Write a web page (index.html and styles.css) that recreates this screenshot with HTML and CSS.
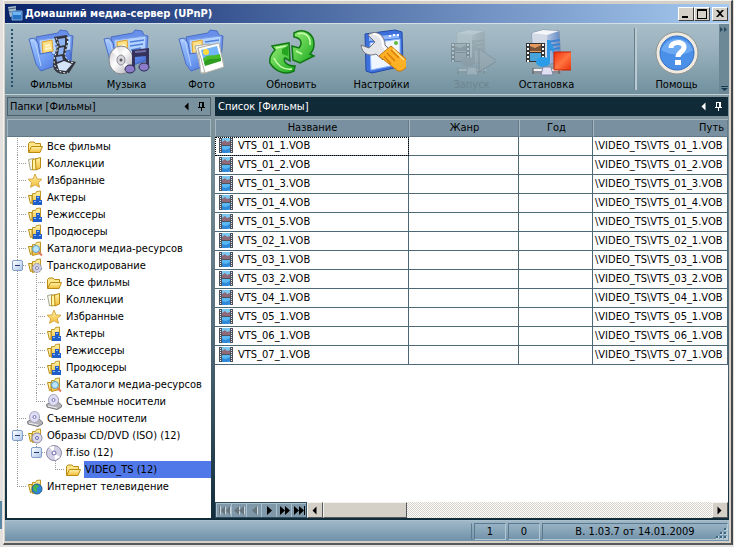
FILE: index.html
```
<!DOCTYPE html>
<html lang="ru">
<head>
  <meta charset="UTF-8">
  <title>Домашний медиа-сервер (UPnP)</title>
  <meta name="viewport" content="width=device-width, initial-scale=1.0">
  <link rel="stylesheet" href="styles.css">
</head>
<body>

<!-- shared icons -->
<svg class="sprite" aria-hidden="true">
  <defs>
    <linearGradient id="gBlue" x1="0" y1="0" x2="1" y2="1">
      <stop offset="0" stop-color="#a9ccff"/><stop offset=".5" stop-color="#6f9df2"/><stop offset="1" stop-color="#3c5fd0"/>
    </linearGradient>
    <linearGradient id="gGreen" x1="0" y1="0" x2="1" y2="1">
      <stop offset="0" stop-color="#9df07a"/><stop offset="1" stop-color="#17a81c"/>
    </linearGradient>
    <linearGradient id="gRed" x1="0" y1="0" x2="1" y2="1">
      <stop offset="0" stop-color="#f0300c"/><stop offset=".5" stop-color="#ff7440"/><stop offset="1" stop-color="#e83008"/>
    </linearGradient>
    <linearGradient id="gDisc" x1="0" y1="0" x2="1" y2="1">
      <stop offset="0" stop-color="#c4c4c8"/><stop offset=".45" stop-color="#fff"/><stop offset="1" stop-color="#a0a0aa"/>
    </linearGradient>
    <linearGradient id="gYellow" x1="0" y1="0" x2="0" y2="1">
      <stop offset="0" stop-color="#fff3a8"/><stop offset="1" stop-color="#f2bc38"/>
    </linearGradient>
    <linearGradient id="gServer" x1="0" y1="0" x2="1" y2="0">
      <stop offset="0" stop-color="#eef2f8"/><stop offset=".5" stop-color="#b8c6de"/><stop offset="1" stop-color="#5f87c4"/>
    </linearGradient>
    <symbol id="big-folder" viewBox="0 0 48 48">
      <path d="M8 9 30 5 32 2 39 3 41 7 45 8 43 33 13 42Z" fill="#6890ea" stroke="#4a6cc4"/>
      <path d="M11 12 43 8 42 31 14 39Z" fill="#b5d3ff" stroke="#7ba0ea"/>
      <path d="M14 14 24 12 25 23 15 26Z" fill="#ffe083" stroke="#e0a02a"/>
      <path d="M17 18 22 17M17 21 23 20" stroke="#fff6d0" stroke-width="2"/>
      <path d="M27 14 41 12M27 18 40 16M28 22 38 20" stroke="#4f80db" stroke-width="1.5"/>
      <path d="M1 11 6 10 10 15 12 26 23 24 25 27 42 22 43 32 13 43 8 36Z" fill="url(#gBlue)" stroke="#4a6cc4"/>
      <path d="M3 13 7 13 13 38" fill="none" stroke="#bbd3ff"/>
    </symbol>
    <symbol id="big-film" viewBox="0 0 48 48">
      <use href="#big-folder"/>
      <path d="M26 9 39 7C42 14 38 22 37 28 38 32 42 33 48 34L41 45C32 48 25 44 25 36 25 28 29 22 29 17Z" fill="#33353f"/>
      <path d="M30 11 37 10 37 17 32 18ZM31 20 36 19 35 26 30 27ZM28 29 34 28 35 32 29 34Z" fill="#8fb2f0"/>
      <path d="M29 36 36 33 44 36 38 43 31 42Z" fill="#d5e6fb"/>
      <path d="M28 10C33 18 27 25 26 32 26 41 31 45 40 45M39 9C41 15 37 22 37 27 38 31 41 34 46 35" fill="none" stroke="#eef0f4" stroke-dasharray="2 2"/>
    </symbol>
    <symbol id="big-music" viewBox="0 0 48 48">
      <use href="#big-folder"/>
      <ellipse cx="18" cy="32" rx="12" ry="14" fill="url(#gDisc)" stroke="#85858c"/>
      <path d="M18 32 9 24 14 19ZM18 32 28 39 23 44Z" fill="#fff" opacity=".8"/>
      <ellipse cx="18" cy="32" rx="4" ry="5" fill="#d6d6dc" stroke="#8c8c96"/>
      <circle cx="18" cy="32" r="1.5" fill="#555"/>
      <path d="M29 22 46 20V39H43V28L32 29V41H29Z" fill="#35335e"/>
      <path d="M32 24 43 23" stroke="#7471a8" stroke-width="2"/>
      <ellipse cx="27" cy="41" rx="5" ry="4" fill="#8a7cc8" stroke="#2b2850"/>
      <ellipse cx="41" cy="39" rx="5" ry="4" fill="#8a7cc8" stroke="#2b2850"/>
    </symbol>
    <symbol id="big-photo" viewBox="0 0 48 48">
      <use href="#big-folder"/>
      <path d="M17 18 31 16 38 40 24 46Z" fill="#f6f6f2" stroke="#a8a8a0"/>
      <path d="M20 20 36 17 44 39 23 45Z" fill="#fff" stroke="#bbb"/>
      <path d="M20 20 41 15 46 39 27 45Z" fill="#fff" stroke="#b0b0a8"/>
      <path d="M23 22 39 18 42 29 26 34Z" fill="#72b5fb"/>
      <path d="M25 31C30 25 33 29 42 26L43 32 27 37Z" fill="#49bd2b"/>
      <path d="M26 34C31 29 36 32 43 30L43 33 27 38Z" fill="#2c9b1f"/>
      <circle cx="28" cy="24" r="3" fill="#ffdc3c"/>
    </symbol>
    <symbol id="big-refresh" viewBox="0 0 48 48">
      <path d="M4 18 21 15 22 33 17 30C15 33 18 38 27 38L26 43C17 48 7 43 2 35 1 30 4 25 7 22Z" fill="url(#gGreen)" stroke="#117714" stroke-width="1.5"/>
      <path d="M26 5C36-1 46 6 46 16 46 21 44 24 42 26L46 28 32 35 25 32 24 18 31 20C35 15 33 10 26 9Z" fill="url(#gGreen)" stroke="#117714" stroke-width="1.5"/>
      <path d="M8 20 18 18M6 30C10 39 16 42 24 41M30 6C37 3 43 9 42 17M28 23 34 26" fill="none" stroke="#c6ffad" stroke-width="1.5"/>
      <path d="M14 21 20 18 20 28 14 26Z" fill="#26a61f"/>
    </symbol>
    <symbol id="big-settings" viewBox="0 0 48 48">
      <path d="M7 6 37 2 44 4 45 38 14 45 8 43Z" fill="#3d70db" stroke="#244ca8"/>
      <path d="M12 15 42 11 42 36 13 42Z" fill="#eff6ff" stroke="#8eb7ff"/>
      <path d="M11 9 41 6 41 10 11 13Z" fill="#8eb7ff"/>
      <path d="M31 8h2M35 7h2M39 7h2" stroke="#fff" stroke-width="2"/>
      <circle cx="38" cy="15" r="2" fill="#65b83f"/>
      <path d="M10 7C18 1 27 7 27 17L33 23 25 32 18 26C10 29 4 25 3 17L11 20 17 14Z" fill="#e4e5e8" stroke="#74767d"/>
      <path d="M15 6C22 6 25 12 25 18L29 23" fill="none" stroke="#fff" stroke-width="2"/>
      <path d="M21 28 33 18 48 31C52 37 46 44 40 43Z" fill="#ffb126" stroke="#c97606"/>
      <path d="M29 25 37 33M33 22 41 30M26 28 33 36" stroke="#dc7e08" stroke-width="1.5"/>
      <path d="M35 21 46 32" stroke="#ffe08a" stroke-width="1.5"/>
    </symbol>
    <symbol id="big-server" viewBox="0 0 48 48">
      <path d="M9 5 20 2 36 3 38 34 22 37 10 33Z" fill="url(#gServer)" stroke="#8290ac"/>
      <path d="M9 5 24 7 24 36 10 33Z" fill="#d3dae6"/>
      <path d="M9 5 20 2 36 3 24 7Z" fill="#f4f6fa"/>
      <path d="M25 14 37 12M25 18 37 16M25 22 37 20" stroke="#3d82cf" stroke-width="2"/>
      <path d="M3 15H22V34H3Z" fill="#333"/>
      <path d="M7 16H18V24H7Z" fill="#e59b60"/><path d="M7 25H18V33H7Z" fill="#4aa4dc"/>
      <path d="M7 18 12 20 18 17V23H7Z" fill="#7b5438"/>
      <path d="M5 16V34M20 16V34" stroke="#fff" stroke-width="2" stroke-dasharray="2 2"/>
      <path d="M24 12H27C28 18 34 20 30 27 30 22 27 21 27 20V34H24Z" fill="#2f96e4"/>
      <ellipse cx="20" cy="34" rx="7" ry="5" fill="#2b9ce8"/>
      <path d="M10 43H38" stroke="#8b8e96" stroke-width="5"/>
      <path d="M10 42H38" stroke="#f4f4f6" stroke-width="2"/>
      <path d="M20 39H28L30 47H18Z" fill="#dfe0f1" stroke="#8084a4"/>
      <path d="M10 40v6M36 40v6" stroke="#555" stroke-width="1"/>
    </symbol>
    <symbol id="big-start" viewBox="0 0 48 48">
      <use href="#big-server"/>
      <path d="M31 21 49 33 31 44Z" fill="#aaa" stroke="#555"/>
    </symbol>
    <symbol id="big-stop" viewBox="0 0 48 48">
      <use href="#big-server"/>
      <path d="M31 24H49V42H31Z" fill="url(#gRed)" stroke="#c02404"/>
    </symbol>
    <symbol id="big-help" viewBox="0 0 48 48">
      <circle cx="24" cy="25" r="21" fill="#eeeae0" stroke="#8f928f"/>
      <circle cx="24" cy="25" r="17" fill="#4a8fe8" stroke="#356cc0"/>
      <path d="M8 22A17 17 0 0 1 40 22C32 28 18 28 8 22Z" fill="#79b4f8" opacity=".7"/>
      <path d="M18 20C18 13 31 13 31 19 31 24 25 24 25 29" fill="none" stroke="#fff" stroke-width="5"/>
      <path d="M22 32H28V37H22Z" fill="#fff"/>
    </symbol>

    <symbol id="folder" viewBox="0 0 16 16">
      <path d="M1.500 13V4.500L3 3H7L8.500 4.500H13.500V7" fill="#ffe58a" stroke="#b98a10"/>
      <path d="M1.500 13.500 4.500 7.500H15.500L13 13.500Z" fill="url(#gYellow)" stroke="#b98a10"/>
    </symbol>
    <symbol id="stack" viewBox="0 0 16 16">
      <path d="M1.500 3.500 6.500 2.500V13L3.500 14Z" fill="#f5f5ea" stroke="#a8a890"/>
      <path d="M5.500 3.500 9.500 2.500V13.500L5.500 14Z" fill="#fff2a0" stroke="#bb9422"/>
      <path d="M8.500 3 13.500 1.500V12L9 14Z" fill="url(#gYellow)" stroke="#b98a10"/>
    </symbol>
    <symbol id="star" viewBox="0 0 16 16">
      <path d="M8 1 10 6 15 6.200 11.300 9.600 12.500 14.300 8 11.800 3.500 14.300 4.700 9.600 1 6.200 6 6Z" fill="url(#gYellow)" stroke="#d8a840"/>
    </symbol>
    <symbol id="sheets" viewBox="0 0 16 16">
      <path d="M1.500 5.500H5V13L3.500 13.500Z" fill="#fff2a8" stroke="#b98a10"/>
      <path d="M5.500 3.500 8.500 3.500 9.500 1.500 13.500 1V12.500L5.500 14.500Z" fill="url(#gYellow)" stroke="#c0962a"/>
    </symbol>
    <symbol id="people" viewBox="0 0 16 16">
      <use href="#sheets"/>
      <path d="M9 6h4v4h2v5H6v-5h3Z" fill="#205dc8"/>
      <path d="M10 7h2v1h-2zM7 11h2v1H7zM12 11h2v1h-2z" fill="#8fc0ff"/>
    </symbol>
    <symbol id="search" viewBox="0 0 16 16">
      <use href="#sheets"/>
      <circle cx="9" cy="8" r="3.500" fill="#b9e4fa" stroke="#5a9cc4"/>
      <path d="M11.500 11 15 14.500" stroke="#df7a5a" stroke-width="2"/>
    </symbol>
    <symbol id="gear" viewBox="0 0 16 16">
      <use href="#sheets"/>
      <circle cx="10" cy="10" r="4.500" fill="#cfcfe4" stroke="#8484a8" stroke-dasharray="2 1"/>
      <circle cx="10" cy="10" r="1.500" fill="#fff" stroke="#8484a8"/>
    </symbol>
    <symbol id="drive" viewBox="0 0 16 16">
      <path d="M.5 10.500 5 8H12L15.500 11V13L11 15.500 1 13Z" fill="#b4b4b8" stroke="#77777c"/>
      <ellipse cx="7.500" cy="6" rx="5" ry="5.500" fill="#e0def2" stroke="#a4a2bc"/>
      <circle cx="7.500" cy="6" r="1.500" fill="#fff" stroke="#7470c0"/>
      <path d="M2 12 11 14" stroke="#f2f2f2"/>
    </symbol>
    <symbol id="disc" viewBox="0 0 16 16">
      <circle cx="8" cy="8" r="7.500" fill="#d2d0e4" stroke="#8b89a4"/>
      <path d="M8 8 3 2 8 1ZM8 8 14 12 9 15Z" fill="#fff"/>
      <circle cx="8" cy="8" r="2" fill="#fff" stroke="#6864b0"/>
    </symbol>
    <symbol id="isodisc" viewBox="0 0 16 16">
      <use href="#sheets"/>
      <circle cx="10" cy="10" r="5" fill="#dcdaea" stroke="#8b89a4"/>
      <circle cx="10" cy="10" r="1.500" fill="#fff" stroke="#6864b0"/>
    </symbol>
    <symbol id="globe" viewBox="0 0 16 16">
      <use href="#sheets"/>
      <circle cx="10" cy="10" r="5" fill="#2f86d8" stroke="#1f5c8e"/>
      <path d="M6 8 9 5.500 12 7 9.500 9.500 10 13 7 12Z" fill="#46b846"/>
    </symbol>
    <symbol id="clip" viewBox="0 0 14 15">
      <path d="M0 0H14V15H0Z" fill="#4c525c"/>
      <path d="M3 0H11V7H3Z" fill="#7cc8f0"/><path d="M3 4 6 2 8 4 11 3V7H3Z" fill="#8e6a78"/>
      <path d="M3 8H11V15H3Z" fill="#58b8f4"/><path d="M3 11 7 12 11 10V14L8 15H3Z" fill="#2f88d8"/>
      <path d="M1.500 1V15M12.500 1V15" stroke="#e8ecf0" stroke-dasharray="1 1"/>
    </symbol>
    <symbol id="pin" viewBox="0 0 8 9">
      <path d="M2 0H6V1H2ZM2 1H3V5H2ZM5 1H7V5H5ZM6 0H7V1H6ZM1 5H8V6H1ZM4 6H5V9H4Z" fill="currentColor"/>
    </symbol>
    <symbol id="left" viewBox="0 0 5 9">
      <path d="M4.500.5V8.500L.5 4.500Z" fill="currentColor"/>
    </symbol>
    <symbol id="right" viewBox="0 0 5 9">
      <path d="M.5.5V8.500L4.500 4.500Z" fill="currentColor"/>
    </symbol>
  </defs>
</svg>

<div class="window">
  <header class="titlebar">
    <svg class="app-icon" viewBox="0 0 16 16">
      <path d="M1 1 9 0V9L3 11Z" fill="#a9bccb"/><path d="M1 3 9 2M2 6 9 5" stroke="#43627d"/>
      <path d="M5 5H15V14H5Z" fill="#2674c8" stroke="#7fa9d4"/><path d="M6 6H14V9H6Z" fill="#70b3ef"/>
    </svg>
    <h1>Домашний медиа-сервер (UPnP)</h1>
    <div class="win-buttons">
      <button type="button" aria-label="Свернуть"><svg viewBox="0 0 12 10"><path d="M2 7H8V9H2Z"/></svg></button>
      <button type="button" aria-label="Развернуть"><svg viewBox="0 0 12 10"><path d="M1 0H11V10H1ZM2 2V9H10V2Z" fill-rule="evenodd"/></svg></button>
      <button type="button" class="close" aria-label="Закрыть"><svg viewBox="0 0 12 10"><path d="M2 1H4L6 3 8 1H10L7 4.500 10 8H8L6 6 4 8H2L5 4.500Z"/></svg></button>
    </div>
  </header>

  <nav class="toolbar">
    <span class="grip"></span>
    <div class="group">
      <button type="button" class="tool"><svg><use href="#big-film"/></svg>Фильмы</button>
      <button type="button" class="tool"><svg><use href="#big-music"/></svg>Музыка</button>
      <button type="button" class="tool"><svg><use href="#big-photo"/></svg>Фото</button>
    </div>
    <div class="group">
      <button type="button" class="tool"><svg><use href="#big-refresh"/></svg>Обновить</button>
    </div>
    <div class="group">
      <button type="button" class="tool"><svg><use href="#big-settings"/></svg>Настройки</button>
    </div>
    <div class="group">
      <button type="button" class="tool" disabled><svg><use href="#big-start"/></svg>Запуск</button>
      <button type="button" class="tool"><svg><use href="#big-stop"/></svg>Остановка</button>
    </div>
    <div class="group help">
      <button type="button" class="tool"><svg><use href="#big-help"/></svg>Помощь</button>
    </div>
    <button type="button" class="overflow" aria-label="Ещё">
      <svg viewBox="0 0 8 5"><path d="M0 0 3 2.500 0 5ZM4 0 7 2.500 4 5Z" fill="#24485e"/></svg>
      <svg viewBox="0 0 8 5"><path d="M1 0H8V1H1ZM1 2H8L4.500 5Z" fill="#173a50"/></svg>
    </button>
  </nav>

  <main class="panes">
    <section class="pane folders">
      <div class="pane-title">
        <h2>Папки [Фильмы]</h2>
        <button type="button" aria-label="Скрыть"><svg class="arrow"><use href="#left"/></svg></button>
        <button type="button" aria-label="Закрепить"><svg class="pin"><use href="#pin"/></svg></button>
      </div>
      <div class="blank-head"></div>
      <div class="tree-box">
        <ul class="tree">
          <li><div class="node"><svg><use href="#folder"/></svg><a href="#">Все фильмы</a></div></li>
          <li><div class="node"><svg><use href="#stack"/></svg><a href="#">Коллекции</a></div></li>
          <li><div class="node"><svg><use href="#star"/></svg><a href="#">Избранные</a></div></li>
          <li><div class="node"><svg><use href="#people"/></svg><a href="#">Актеры</a></div></li>
          <li><div class="node"><svg><use href="#people"/></svg><a href="#">Режиссеры</a></div></li>
          <li><div class="node"><svg><use href="#people"/></svg><a href="#">Продюсеры</a></div></li>
          <li><div class="node"><svg><use href="#search"/></svg><a href="#">Каталоги медиа-ресурсов</a></div></li>
          <li>
            <div class="node"><button type="button" class="toggle" aria-label="Свернуть ветку"></button><svg><use href="#gear"/></svg><a href="#">Транскодирование</a></div>
            <ul>
              <li><div class="node"><svg><use href="#folder"/></svg><a href="#">Все фильмы</a></div></li>
              <li><div class="node"><svg><use href="#stack"/></svg><a href="#">Коллекции</a></div></li>
              <li><div class="node"><svg><use href="#star"/></svg><a href="#">Избранные</a></div></li>
              <li><div class="node"><svg><use href="#people"/></svg><a href="#">Актеры</a></div></li>
              <li><div class="node"><svg><use href="#people"/></svg><a href="#">Режиссеры</a></div></li>
              <li><div class="node"><svg><use href="#people"/></svg><a href="#">Продюсеры</a></div></li>
              <li><div class="node"><svg><use href="#search"/></svg><a href="#">Каталоги медиа-ресурсов</a></div></li>
              <li><div class="node"><svg><use href="#drive"/></svg><a href="#">Съемные носители</a></div></li>
            </ul>
          </li>
          <li><div class="node"><svg><use href="#drive"/></svg><a href="#">Съемные носители</a></div></li>
          <li>
            <div class="node"><button type="button" class="toggle" aria-label="Свернуть ветку"></button><svg><use href="#isodisc"/></svg><a href="#">Образы CD/DVD (ISO) (12)</a></div>
            <ul>
              <li>
                <div class="node"><button type="button" class="toggle" aria-label="Свернуть ветку"></button><svg><use href="#disc"/></svg><a href="#">ff.iso (12)</a></div>
                <ul>
                  <li><div class="node"><svg><use href="#folder"/></svg><a href="#" class="selected">VIDEO_TS (12)</a></div></li>
                </ul>
              </li>
            </ul>
          </li>
          <li><div class="node"><svg><use href="#globe"/></svg><a href="#">Интернет телевидение</a></div></li>
        </ul>
      </div>
    </section>

    <section class="pane list">
      <div class="pane-title active">
        <h2>Список [Фильмы]</h2>
        <button type="button" aria-label="Скрыть"><svg class="arrow"><use href="#left"/></svg></button>
        <button type="button" aria-label="Закрепить"><svg class="pin"><use href="#pin"/></svg></button>
      </div>
      <div class="grid-box">
        <table>
          <colgroup><col class="c-name"><col class="c-genre"><col class="c-year"><col></colgroup>
          <thead>
            <tr><th>Название</th><th>Жанр</th><th>Год</th><th class="path">Путь</th></tr>
          </thead>
          <tbody>
            <tr class="focused"><td><svg><use href="#clip"/></svg>VTS_01_1.VOB</td><td></td><td></td><td>\VIDEO_TS\VTS_01_1.VOB</td></tr>
            <tr><td><svg><use href="#clip"/></svg>VTS_01_2.VOB</td><td></td><td></td><td>\VIDEO_TS\VTS_01_2.VOB</td></tr>
            <tr><td><svg><use href="#clip"/></svg>VTS_01_3.VOB</td><td></td><td></td><td>\VIDEO_TS\VTS_01_3.VOB</td></tr>
            <tr><td><svg><use href="#clip"/></svg>VTS_01_4.VOB</td><td></td><td></td><td>\VIDEO_TS\VTS_01_4.VOB</td></tr>
            <tr><td><svg><use href="#clip"/></svg>VTS_01_5.VOB</td><td></td><td></td><td>\VIDEO_TS\VTS_01_5.VOB</td></tr>
            <tr><td><svg><use href="#clip"/></svg>VTS_02_1.VOB</td><td></td><td></td><td>\VIDEO_TS\VTS_02_1.VOB</td></tr>
            <tr><td><svg><use href="#clip"/></svg>VTS_03_1.VOB</td><td></td><td></td><td>\VIDEO_TS\VTS_03_1.VOB</td></tr>
            <tr><td><svg><use href="#clip"/></svg>VTS_03_2.VOB</td><td></td><td></td><td>\VIDEO_TS\VTS_03_2.VOB</td></tr>
            <tr><td><svg><use href="#clip"/></svg>VTS_04_1.VOB</td><td></td><td></td><td>\VIDEO_TS\VTS_04_1.VOB</td></tr>
            <tr><td><svg><use href="#clip"/></svg>VTS_05_1.VOB</td><td></td><td></td><td>\VIDEO_TS\VTS_05_1.VOB</td></tr>
            <tr><td><svg><use href="#clip"/></svg>VTS_06_1.VOB</td><td></td><td></td><td>\VIDEO_TS\VTS_06_1.VOB</td></tr>
            <tr><td><svg><use href="#clip"/></svg>VTS_07_1.VOB</td><td></td><td></td><td>\VIDEO_TS\VTS_07_1.VOB</td></tr>
          </tbody>
        </table>
      </div>
      <div class="bottom-bar">
        <div class="navigator">
          <button type="button" disabled aria-label="Первая"><svg viewBox="0 0 13 9"><path d="M1 0H2V9H1ZM7 0V9L3 4.500ZM12 0V9L8 4.500Z"/></svg></button>
          <button type="button" disabled aria-label="Страница назад"><svg viewBox="0 0 13 9"><path d="M6 0V9L1 4.500ZM11 0V9L6 4.500Z"/></svg></button>
          <button type="button" disabled aria-label="Назад"><svg viewBox="0 0 13 9"><path d="M9 0V9L4 4.500Z"/></svg></button>
          <button type="button" aria-label="Вперед"><svg viewBox="0 0 13 9"><path d="M4 0V9L9 4.500Z"/></svg></button>
          <button type="button" aria-label="Страница вперед"><svg viewBox="0 0 13 9"><path d="M2 0V9L7 4.500ZM7 0V9L12 4.500Z"/></svg></button>
          <button type="button" aria-label="Последняя"><svg viewBox="0 0 13 9"><path d="M1 0V9L6 4.500ZM6 0V9L11 4.500ZM11 0H12V9H11Z"/></svg></button>
        </div>
        <div class="scrollbar">
          <button type="button" class="scroll-arrow" aria-label="Влево"><svg class="arrow"><use href="#left"/></svg></button>
          <span class="thumb"></span>
          <button type="button" class="scroll-arrow end" aria-label="Вправо"><svg class="arrow"><use href="#right"/></svg></button>
        </div>
      </div>
    </section>
  </main>

  <footer class="statusbar">
    <span class="cell wide"></span>
    <span class="cell num">1</span>
    <span class="cell num">0</span>
    <span class="cell version">В. 1.03.7 от 14.01.2009</span>
    <svg class="resize" viewBox="0 0 12 12"><path d="M8 0h3v3H8zM4 4h3v3H4zM8 4h3v3H8zM0 8h3v3H0zM4 8h3v3H4zM8 8h3v3H8z" fill="#b5cbd8"/><path d="M8 0h2v2H8zM4 4h2v2H4zM8 4h2v2H8zM0 8h2v2H0zM4 8h2v2H4zM8 8h2v2H8z" fill="#3b6480"/></svg>
  </footer>
</div>

</body>
</html>
```
FILE: styles.css
```
* {
  box-sizing: border-box;
}

body {
  margin: 0;
  height: 100vh;
  padding: 0 0 2px 3px;
  background: linear-gradient(#5a88a4, #5a88a4) left 0 bottom 18px / 2px 28px no-repeat, #e4e0dd;
  font-family: "DejaVu Sans Condensed", Tahoma, sans-serif;
  font-size: 11px;
  line-height: 17px;
  color: #000;
}

button {
  margin: 0;
  padding: 0;
  border: 0;
  background: none;
  font: inherit;
  color: inherit;
}

h1, h2 {
  margin: 0;
  font-size: 11px;
}

svg {
  display: block;
  flex: none;
}

.sprite {
  position: absolute;
  width: 0;
  height: 0;
}

.window {
  display: flex;
  flex-direction: column;
  height: 100%;
  padding: 3px 2px 2px 1px;
  margin-right: 1px;
  background: #d4d0c8;
  border: 1px solid #f4f2ee;
  border-right: 2px solid #45494c;
  border-bottom: 2px solid #55595b;
}

/* title bar */
.titlebar {
  display: flex;
  align-items: center;
  height: 19px;
  padding: 0 1px 0 2px;
  background: linear-gradient(90deg, #0a246a, #a6caf0);
  color: #fff;
}

.app-icon {
  width: 16px;
  height: 16px;
}

.titlebar h1 {
  flex: 1;
  padding-left: 2px;
  font-weight: bold;
}

.win-buttons {
  display: flex;
}

.win-buttons button {
  width: 16px;
  height: 14px;
  padding-left: 1px;
  background: #d4d0c8;
  border: 1px solid;
  border-color: #fff #404040 #404040 #fff;
}

.win-buttons svg {
  width: 12px;
  height: 10px;
}

.win-buttons .close {
  margin-left: 2px;
}

/* toolbar */
.toolbar {
  display: flex;
  height: 72px;
  padding-left: 6px;
  background: linear-gradient(#a7bdc8, #9db4c0 30%, #71909e);
  border-top: 1px solid #d3e0e6;
  border-bottom: 1px solid #c0d0d8;
}

.grip {
  width: 2px;
  margin: 5px 1px 6px 0;
  background: repeating-linear-gradient(#24506a 0 2px, transparent 2px 4px);
}

.group {
  display: flex;
  margin-right: 15px;
}

.tool {
  display: flex;
  flex-direction: column;
  align-items: center;
  width: 75px;
  padding-top: 4px;
}

.tool svg {
  width: 48px;
  height: 48px;
  overflow: visible;
}

.tool:disabled {
  color: #708590;
}

.tool:disabled svg {
  filter: grayscale(1);
  opacity: 0.25;
}

.help {
  margin: 0 5px 0 auto;
}

.help::before {
  content: "";
  width: 2px;
  margin: 4px 2px 4px 0;
  background: #b9cad3;
  border-left: 1px solid #67808e;
}

.overflow {
  display: flex;
  flex-direction: column;
  justify-content: space-between;
  align-items: center;
  width: 10px;
  padding: 3px 0;
  background: #6c8795;
}

.overflow svg {
  width: 8px;
  height: 5px;
}

/* panes */
.panes {
  flex: 1;
  display: flex;
  min-height: 0;
  padding: 2px 1px 2px 2px;
  background: linear-gradient(#82979f, #5b7380 50%, #102b3a);
}

.pane {
  display: flex;
  flex-direction: column;
  min-width: 0;
}

.folders {
  flex: 0 0 204px;
  margin-right: 4px;
}

.list {
  flex: 1;
}

.pane-title {
  display: flex;
  align-items: center;
  gap: 8px;
  height: 19px;
  padding: 0 5px 0 2px;
  border: 1px solid #4d626e;
  background: #7a919e;
}

.pane-title.active {
  background: #102a38;
  border-color: #102a38;
  color: #fff;
}

.pane-title h2 {
  flex: 1;
  font-weight: normal;
}

.arrow {
  width: 5px;
  height: 9px;
}

.pin {
  width: 8px;
  height: 9px;
}

.blank-head {
  height: 18px;
  margin-top: 3px;
  background: #7890a0;
  border: 1px solid #a4b6c0;
  border-bottom-color: #5f7786;
}

.tree-box {
  flex: 1;
  min-height: 0;
  padding: 1px 0 0 5px;
  background: #fff;
  overflow: hidden;
}

.tree,
.tree ul {
  margin: 0;
  padding: 0;
  list-style: none;
}

.tree ul {
  margin-left: 19px;
}

/* dotted branch lines */
.tree li {
  background: repeating-linear-gradient(#999 0 1px, transparent 1px 2px) 5px 0 / 1px 100% no-repeat;
}

.tree li:last-child {
  background-size: 1px 8px;
}

.node {
  display: flex;
  align-items: center;
  height: 17px;
  padding-left: 15px;
  background: repeating-linear-gradient(90deg, #999 0 1px, transparent 1px 2px) 5px 8px / 10px 1px no-repeat;
}

.node svg {
  width: 16px;
  height: 16px;
  margin-right: 3px;
}

.node a {
  flex: 1;
  padding-left: 1px;
  color: #000;
  text-decoration: none;
  white-space: nowrap;
}

.node .selected {
  background: #5078e8;
}

.toggle {
  width: 11px;
  height: 11px;
  margin: 0 4px 0 -15px;
  border: 1px solid #7f9fc8;
  border-radius: 2px;
  background: linear-gradient(#20386c, #20386c) center / 5px 1px no-repeat, linear-gradient(135deg, #fff, #aec6ea);
}

/* file list */
.grid-box {
  flex: 1;
  min-height: 0;
  margin-top: 3px;
  background: #fff;
  overflow: hidden;
}

table {
  width: 100%;
  table-layout: fixed;
  border-collapse: separate;
  border-spacing: 0;
}

.c-name {
  width: 194px;
}

.c-genre {
  width: 110px;
}

.c-year {
  width: 74px;
}

th {
  height: 18px;
  padding: 0 4px;
  background: #7890a0;
  border: 1px solid #a4b6c0;
  border-width: 1px 0 1px 1px;
  border-bottom-color: #5f7786;
  box-shadow: inset -1px 0 #647c8a;
  font-weight: normal;
  line-height: 16px;
}

th.path {
  text-align: right;
}

td {
  height: 19px;
  padding: 0 2px;
  border-right: 1px solid #4d6877;
  border-bottom: 1px solid #4d6877;
  line-height: 18px;
  white-space: nowrap;
  overflow: hidden;
}

td:first-child {
  padding-left: 4px;
}

td svg {
  float: left;
  width: 14px;
  height: 15px;
  margin: 1px 5px 0 0;
}

.focused td:first-child {
  outline: 1px dotted #000;
  outline-offset: -1px;
}

.bottom-bar {
  display: flex;
  height: 16px;
  background: #fff;
}

.navigator {
  display: flex;
  background: #7f99aa;
  border: 1px solid #304e60;
}

.navigator button {
  width: 15px;
  padding-left: 1px;
  border-left: 1px solid #a9bfcc;
  border-top: 1px solid #a9bfcc;
}

.navigator svg {
  width: 13px;
  height: 9px;
}

.navigator button:disabled svg {
  fill: #66747c;
  filter: drop-shadow(1px 0 #c8d4da);
}

.scrollbar {
  flex: 1;
  display: flex;
  background: repeating-conic-gradient(#d4d0c8 0 25%, #fff 0 50%) 0 0 / 2px 2px;
}

.scroll-arrow,
.thumb {
  background: #d4d0c8;
  border: 1px solid;
  border-color: #f4f2ee #55595b #55595b #f4f2ee;
}

.scroll-arrow {
  width: 16px;
  padding-left: 4px;
}

.scroll-arrow.end {
  margin-left: auto;
}

.thumb {
  width: 84px;
}

/* status bar */
.statusbar {
  display: flex;
  align-items: center;
  gap: 2px;
  height: 21px;
  padding: 2px 1px 1px;
  background: linear-gradient(#9fb8c8, #6f90a8);
  border-top: 1px solid #a9bfcc;
}

.cell {
  height: 17px;
  border: 1px solid #5c7a8e;
  border-color: #5c7a8e #b4c8d4 #b4c8d4 #5c7a8e;
  text-align: center;
  line-height: 16px;
}

.wide {
  flex: 1;
  border-color: transparent #5c7a8e transparent transparent;
}

.num {
  width: 32px;
}

.version {
  width: 186px;
}

.resize {
  width: 12px;
  height: 12px;
  margin-left: -14px;
  align-self: flex-end;
}
```
